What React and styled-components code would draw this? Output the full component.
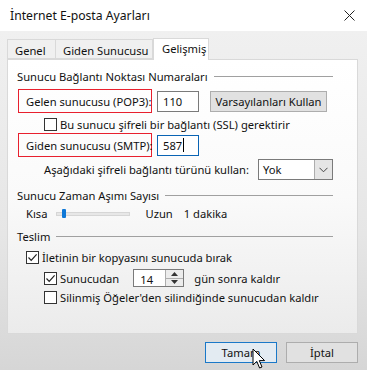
import { createGlobalStyle } from "styled-components";
import styled from "styled-components";

const GlobalStyle = createGlobalStyle`
  html, body { margin: 0; padding: 0; }
  body {
    font-family: "Noto Sans", "Open Sans", sans-serif;
    font-size: 11.2px;
    color: #000;
    background: #f0f0f0;
    white-space: nowrap;
  }
`;

const CheckMark = () => (
  <svg width="11" height="11" viewBox="0 0 11 11">
    <path d="M1.5 5.5 L4.2 8.3 L9.6 2.3" fill="none" stroke="#222" strokeWidth="1.2" />
  </svg>
);

const Cursor = () => (
  <svg width="14" height="22" viewBox="0 0 14 22">
    <path
      d="M1 1 L1 17 L4.8 13.4 L7.6 20 L10 19 L7.3 12.6 L12.6 12.6 Z"
      fill="#fff"
      stroke="#000"
      strokeWidth="1"
      strokeLinejoin="round"
    />
  </svg>
);

function Check({ checked, children }) {
  return (
    <CheckLabel>
      <Box>{checked && <CheckMark />}</Box>
      {children}
    </CheckLabel>
  );
}

export default function App() {
  return (
    <>
      <GlobalStyle />
      <Dialog>
        <TitleBar>
          <Title>İnternet E-posta Ayarları</Title>
          <Close>
            <svg width="11" height="11" viewBox="0 0 11 11">
              <path d="M0.5 0.5 L10.5 10.5 M10.5 0.5 L0.5 10.5" stroke="#222" strokeWidth="1" />
            </svg>
          </Close>
        </TitleBar>
        <Body>
          <Tabs>
            <Tab $w={49}>Genel</Tab>
            <Tab $w={97}>Giden Sunucusu</Tab>
            <Tab $w={56} $active>Gelişmiş</Tab>
          </Tabs>
          <Panel>
            <GroupHead $mt={8}>
              Sunucu Bağlantı Noktası Numaraları
            </GroupHead>
            <Row $mt={5}>
              <RedBox>Gelen sunucusu (POP3):</RedBox>
              <Input>110</Input>
              <Button $w={117} $ml={11}>Varsayılanları Kullan</Button>
            </Row>
            <Row $mt={4} $indent={27}>
              <Check>Bu sunucu şifreli bir bağlantı (SSL) gerektirir</Check>
            </Row>
            <Row $mt={1}>
              <RedBox>Giden sunucusu (SMTP):</RedBox>
              <Input $focus>587<Caret /></Input>
            </Row>
            <Row $mt={2} $indent={27}>
              <span>Aşağıdaki şifreli bağlantı türünü kullan:</span>
              <Select>
                <span>Yok</span>
                <SelectArrow>
                  <svg width="9" height="6" viewBox="0 0 9 6">
                    <path d="M0.5 0.8 L4.5 4.8 L8.5 0.8" fill="none" stroke="#444" strokeWidth="1" />
                  </svg>
                </SelectArrow>
              </Select>
            </Row>
            <GroupHead $mt={7}>Sunucu Zaman Aşımı Sayısı</GroupHead>
            <Row $mt={3} $indent={9}>
              <span>Kısa</span>
              <Slider>
                <Thumb />
              </Slider>
              <span>Uzun</span>
              <Duration>1 dakika</Duration>
            </Row>
            <GroupHead $mt={7}>Teslim</GroupHead>
            <Row $mt={6} $indent={9}>
              <Check checked>İletinin bir kopyasını sunucuda bırak</Check>
            </Row>
            <Row $mt={4} $indent={27}>
              <Check checked>Sunucudan</Check>
              <Spinner>
                <SpinValue>14</SpinValue>
                <SpinButtons>
                  <SpinBtn>
                    <svg width="7" height="4" viewBox="0 0 7 4"><path d="M0 4 L3.5 0 L7 4 Z" fill="#333" /></svg>
                  </SpinBtn>
                  <SpinBtn>
                    <svg width="7" height="4" viewBox="0 0 7 4"><path d="M0 0 L3.5 4 L7 0 Z" fill="#333" /></svg>
                  </SpinBtn>
                </SpinButtons>
              </Spinner>
              <span>gün sonra kaldır</span>
            </Row>
            <Row $mt={3} $indent={27}>
              <Check>Silinmiş Öğeler'den silindiğinde sunucudan kaldır</Check>
            </Row>
          </Panel>
          <Footer>
            <Button $w={72} $primary>
              Tamam
              <CursorWrap><Cursor /></CursorWrap>
            </Button>
            <Button $w={72}>İptal</Button>
          </Footer>
        </Body>
      </Dialog>
    </>
  );
}

const Dialog = styled.div`
  width: 367px;
  height: 370px;
  display: flex;
  flex-direction: column;
  overflow: hidden;
`;

const TitleBar = styled.div`
  height: 31px;
  background: #fff;
  display: flex;
  align-items: center;
  justify-content: space-between;
  padding: 0 12px 0 10px;
  flex-shrink: 0;
`;

const Title = styled.div`
  font-size: 12.2px;
  color: #111;
`;

const Close = styled.div`
  display: flex;
  align-items: center;
`;

const Body = styled.div`
  flex: 1;
  background: linear-gradient(#f0f0f0, #e6e6e6 60%, #d6d6d6);
  padding: 8px 9px 0 7px;
  display: flex;
  flex-direction: column;
`;

const Tabs = styled.div`
  display: flex;
  height: 20px;
  align-items: flex-end;
  position: relative;
  z-index: 1;
`;

const Tab = styled.div`
  box-sizing: border-box;
  width: ${(p) => p.$w}px;
  height: ${(p) => (p.$active ? 22 : 20)}px;
  margin-bottom: ${(p) => (p.$active ? -1 : 0)}px;
  border: 1px solid #d9d9d9;
  border-bottom: ${(p) => (p.$active ? "none" : "1px solid #d9d9d9")};
  border-left: ${(p) => (p.$active ? "1px solid #d9d9d9" : "none")};
  &:first-child { border-left: 1px solid #d9d9d9; }
  background: ${(p) => (p.$active ? "#fff" : "#f0f0f0")};
  padding: ${(p) => (p.$active ? "2px 0 0 8px" : "3px 0 0 7px")};
  color: #111;
`;

const Panel = styled.div`
  box-sizing: border-box;
  height: 275px;
  border: 1px solid #d9d9d9;
  background: linear-gradient(#fff, #fafafa 50%, #ebebeb);
  padding: 0 24px 0 9px;
  display: flex;
  flex-direction: column;
`;

const GroupHead = styled.div`
  margin-top: ${(p) => p.$mt}px;
  height: 16px;
  display: flex;
  align-items: center;
  gap: 6px;
  color: #111;
  &::after {
    content: "";
    flex: 1;
    height: 1px;
    background: #a0a0a0;
  }
`;

const Row = styled.div`
  margin-top: ${(p) => p.$mt}px;
  padding-left: ${(p) => p.$indent || 0}px;
  display: flex;
  align-items: center;
  color: #111;
`;

const RedBox = styled.div`
  box-sizing: border-box;
  margin-left: 1px;
  width: 134px;
  height: 24px;
  border: 1px solid #e8202e;
  display: flex;
  align-items: center;
  padding-left: 7px;
`;

const Input = styled.div`
  box-sizing: border-box;
  margin-left: 5px;
  width: 42px;
  height: 21px;
  border: 1px solid ${(p) => (p.$focus ? "#0a64b4" : "#7a7a7a")};
  background: #fff;
  display: flex;
  align-items: center;
  padding-left: 5px;
`;

const Caret = styled.span`
  width: 1px;
  height: 14px;
  background: #000;
  margin-left: 1px;
`;

const Button = styled.div`
  position: relative;
  box-sizing: border-box;
  width: ${(p) => p.$w}px;
  height: 21px;
  margin-left: ${(p) => p.$ml || 0}px;
  border: 1px solid ${(p) => (p.$primary ? "#1a78c8" : "#adadad")};
  background: ${(p) => (p.$primary ? "#e3ebf2" : "#e1e1e1")};
  display: flex;
  align-items: center;
  justify-content: center;
  color: #111;
`;

const CheckLabel = styled.div`
  display: flex;
  align-items: center;
  gap: 3px;
`;

const Box = styled.div`
  box-sizing: border-box;
  width: 13px;
  height: 13px;
  border: 1px solid #333;
  background: #fff;
  display: flex;
  align-items: center;
  justify-content: center;
`;

const Select = styled.div`
  box-sizing: border-box;
  margin-left: 9px;
  width: 78px;
  height: 21px;
  border: 1px solid #7a7a7a;
  background: #fff;
  display: flex;
  align-items: center;
  justify-content: space-between;
  padding-left: 4px;
`;

const SelectArrow = styled.div`
  box-sizing: border-box;
  width: 18px;
  height: 19px;
  border-left: 1px solid #adadad;
  background: #e5e5e5;
  display: flex;
  align-items: center;
  justify-content: center;
`;

const Slider = styled.div`
  position: relative;
  box-sizing: border-box;
  margin: 0 15px 0 9px;
  width: 74px;
  height: 4px;
  background: #e7e7e7;
  border: 1px solid #d6d6d6;
`;

const Thumb = styled.div`
  position: absolute;
  left: 5px;
  top: -4px;
  width: 4px;
  height: 9px;
  border-radius: 1px;
  background: #0f78d7;
`;

const Duration = styled.span`
  margin-left: 11px;
`;

const Spinner = styled.div`
  box-sizing: border-box;
  margin: 0 10px 0 14px;
  width: 51px;
  height: 18px;
  border: 1px solid #7a7a7a;
  background: #fff;
  display: flex;
`;

const SpinValue = styled.div`
  flex: 1;
  display: flex;
  align-items: center;
  padding: 2px 0 0 6px;
`;

const SpinButtons = styled.div`
  width: 17px;
  display: flex;
  flex-direction: column;
  border-left: 1px solid #adadad;
`;

const SpinBtn = styled.div`
  flex: 1;
  display: flex;
  align-items: center;
  justify-content: center;
  background: #ececec;
  & + & { border-top: 1px solid #adadad; }
`;

const Footer = styled.div`
  display: flex;
  justify-content: flex-end;
  gap: 9px;
  padding-top: 8px;
`;

const CursorWrap = styled.div`
  position: absolute;
  left: 46px;
  top: 5px;
`;
